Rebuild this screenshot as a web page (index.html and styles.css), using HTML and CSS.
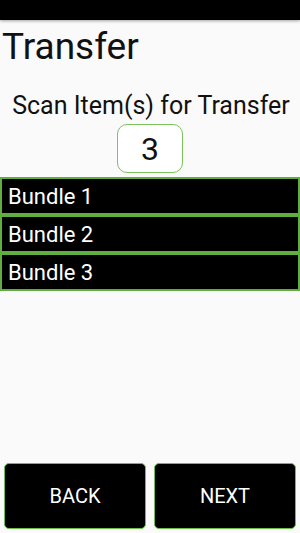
FILE: index.html
```html
<!DOCTYPE html>
<html lang="en">
<head>
  <meta charset="UTF-8" />
  <meta name="viewport" content="width=device-width, initial-scale=1.0"/>
  <title>Transfer</title>
  <link rel="stylesheet" href="styles.css">
</head>
<body>

  <div class="status-bar"></div>

  <div class="screen">
    <h1 class="title">Transfer</h1>
    <div class="prompt">Scan Item(s) for Transfer</div>
    <div class="count">3</div>

    <ul class="bundles">
      <li>Bundle 1</li>
      <li>Bundle 2</li>
      <li>Bundle 3</li>
    </ul>

    <div class="actions">
      <button class="btn">BACK</button>
      <button class="btn">NEXT</button>
    </div>
  </div>

</body>
</html>
```

FILE: styles.css
```css
html, body {
  height: 100%;
}
body {
  margin: 0;
  background: #fafafa;
  font-family: Roboto, 'Noto Sans', sans-serif;
  color: #111;
  display: flex;
  flex-direction: column;
}
.status-bar {
  height: 20px;
  background: #000;
  box-shadow: 0 1px 3px rgba(0, 0, 0, 0.35);
  flex-shrink: 0;
}
.screen {
  flex: 1;
  display: flex;
  flex-direction: column;
}
.title {
  margin: 5px 0 0 2px;
  font-size: 37px;
  font-weight: 400;
  line-height: 44px;
}
.prompt {
  margin-top: 22px;
  text-align: center;
  font-size: 25px;
  line-height: 29px;
  padding-left: 2px;
}
.count {
  align-self: center;
  margin-top: 4px;
  width: 64px;
  height: 45px;
  padding-top: 2px;
  border: 1px solid #7cc35a;
  border-radius: 10px;
  background: #fff;
  font-size: 32px;
  line-height: 45px;
  text-align: center;
}
.bundles {
  list-style: none;
  margin: 4px 0 0;
  padding: 0;
}
.bundles li {
  height: 34px;
  border: 2px solid #5fae3f;
  background: #000;
  color: #fff;
  font-size: 22px;
  line-height: 36px;
  padding-left: 6px;
}
.actions {
  margin-top: auto;
  display: flex;
  gap: 8px;
  padding: 0 4px 4px;
}
.btn {
  flex: 1;
  height: 66px;
  background: #000;
  color: #fff;
  border: 1px solid #6cbf48;
  border-radius: 5px;
  font-family: Roboto, sans-serif;
  font-size: 20px;
  padding: 0;
}
```
